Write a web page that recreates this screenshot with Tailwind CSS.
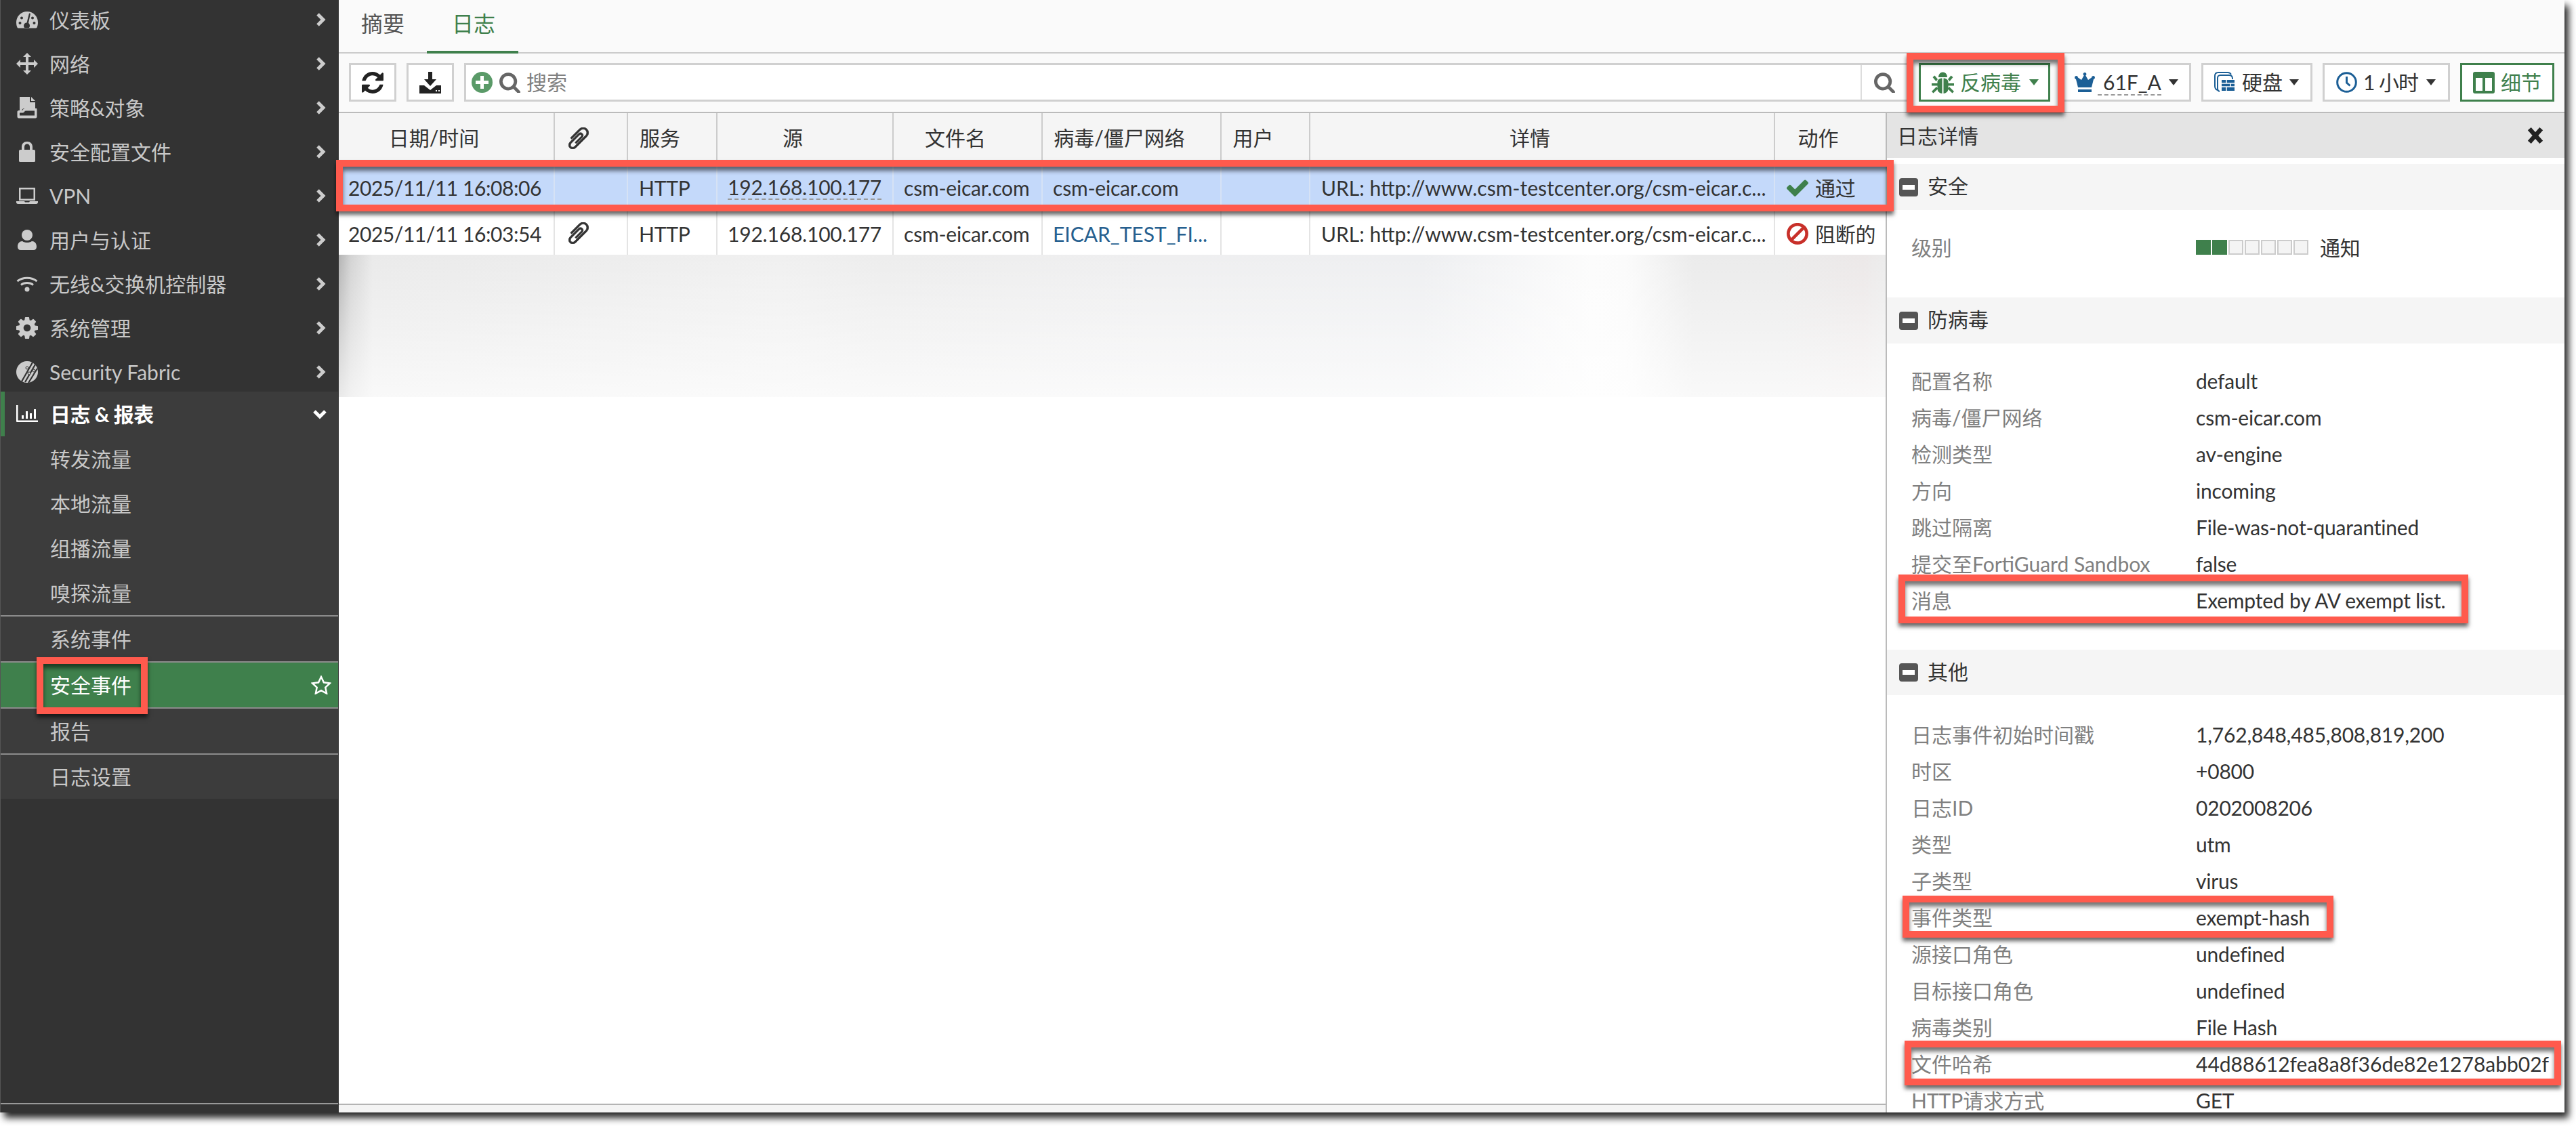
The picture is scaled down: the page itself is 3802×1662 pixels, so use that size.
<!DOCTYPE html>
<html lang="zh">
<head>
    <meta charset="UTF-8">
    <title>FortiGate 安全事件</title>
    <script src="https://cdn.jsdelivr.net/npm/@tailwindcss/browser@4"></script>
</head>
<body class="bg-white font-[Lato,'Noto_Sans_CJK_SC',sans-serif] text-[30px] text-[#333]">
<div class="relative w-[3802px] h-[1662px] overflow-hidden">
    <div class="flex w-[3785px] h-[1642px] bg-white shadow-[6px_8px_10px_rgba(0,0,0,0.85)]">

        <!-- Sidebar -->
        <aside class="flex flex-col w-[500px] h-full shrink-0 overflow-hidden bg-[#333] border-l border-[#555] text-[#c8c8c8]">
            <div class="-mt-[7px]">
                <a class="flex items-center h-[65px] pt-[7px] pl-[23px] pr-[19px]">
                    <svg class="w-[32px] h-[26px] fill-[#ccc]" viewBox="0 0 32 26"><path d="M16 1C7 1 0 8 0 17c0 3 .5 5 1.5 7.5 .3 .5 .8 1 1.5 1h26c.7 0 1.2-.5 1.500-1 1-2.500 1.500-4.500 1.500-7.500C32 8 25 1 16 1z"/><circle cx="5.500" cy="18" r="2" fill="#333"/><circle cx="8" cy="10.500" r="2" fill="#333"/><circle cx="26.500" cy="18" r="2" fill="#333"/><circle cx="24" cy="10.500" r="2" fill="#333"/><path d="M19 3.500l2 .5-3 14c1.500 1 2 2.500 2 4 0 1-.3 2-1 3h-7c-.7-1-1-2-1-3 0-2.500 2-4.500 4.500-4.500z" fill="#333"/></svg>
                    <span class="ml-[17px] flex-1">仪表板</span>
                    <svg class="w-[15px] h-[20px] fill-none stroke-[#ccc] stroke-[5px]" viewBox="0 0 15 20"><path d="M3 2l8 8-8 8"/></svg>
                </a>
                <a class="flex items-center h-[65px] pt-[7px] pl-[23px] pr-[19px]">
                    <svg class="w-[32px] h-[32px] fill-[#ccc]" viewBox="0 0 32 32"><path d="M16 0l6 6h-4v8h8v-4l6 6-6 6v-4h-8v8h4l-6 6-6-6h4v-8H6v4l-6-6 6-6v4h8V6h-4z"/></svg>
                    <span class="ml-[17px] flex-1">网络</span>
                    <svg class="w-[15px] h-[20px] fill-none stroke-[#ccc] stroke-[5px]" viewBox="0 0 15 20"><path d="M3 2l8 8-8 8"/></svg>
                </a>
                <a class="flex items-center h-[65px] pt-[7px] pl-[23px] pr-[19px]">
                    <svg class="w-[32px] h-[32px] fill-[#ccc]" viewBox="0 0 32 32"><path d="M5 0h15v8h8v9H12c-2 0-3 1-4 3H5z"/><path d="M22 0l6 6h-6z"/><path d="M2 22c0-1 .6-1.500 1.500-1.500H9c1.500-2 2-3 4-3h17v12c0 1-.5 1.500-1.500 1.500h-25C2.500 31 2 30.500 2 29.500zm2.500 1v5h23v-8H14c-1.500 0-2 1.500-3.500 3z" fill-rule="evenodd" stroke="#ccc" stroke-width="1"/></svg>
                    <span class="ml-[17px] flex-1">策略&amp;对象</span>
                    <svg class="w-[15px] h-[20px] fill-none stroke-[#ccc] stroke-[5px]" viewBox="0 0 15 20"><path d="M3 2l8 8-8 8"/></svg>
                </a>
                <a class="flex items-center h-[65px] pt-[7px] pl-[23px] pr-[19px]">
                    <svg class="w-[32px] h-[32px] fill-[#ccc]" viewBox="0 0 32 32"><path d="M8 13V9c0-5 3-8 8-8s8 3 8 8v4h2c1.500 0 2 1 2 2v14c0 1.500-.5 2-2 2H6c-1.500 0-2-.5-2-2V15c0-1 .5-2 2-2zm4 0h8V9c0-3-1.500-4.500-4-4.500S12 6 12 9z"/></svg>
                    <span class="ml-[17px] flex-1">安全配置文件</span>
                    <svg class="w-[15px] h-[20px] fill-none stroke-[#ccc] stroke-[5px]" viewBox="0 0 15 20"><path d="M3 2l8 8-8 8"/></svg>
                </a>
                <a class="flex items-center h-[65px] pt-[7px] pl-[23px] pr-[19px]">
                    <svg class="w-[32px] h-[26px] fill-[#ccc]" viewBox="0 0 32 26"><path d="M4 1h24v19H4zm2.500 2.500v14h19v-14z" fill-rule="evenodd"/><path d="M0 21h12l1 1.500h6l1-1.500h12v1.500c0 1.500-1 2.500-2.500 2.500h-27C1 25 0 24 0 22.500z"/></svg>
                    <span class="ml-[17px] flex-1">VPN</span>
                    <svg class="w-[15px] h-[20px] fill-none stroke-[#ccc] stroke-[5px]" viewBox="0 0 15 20"><path d="M3 2l8 8-8 8"/></svg>
                </a>
                <a class="flex items-center h-[65px] pt-[7px] pl-[23px] pr-[19px]">
                    <svg class="w-[32px] h-[32px] fill-[#ccc]" viewBox="0 0 32 32"><circle cx="16" cy="9" r="8"/><path d="M2 26c0-5 3-8 7-8 2 1.500 4.500 2 7 2s5-.5 7-2c4 0 7 3 7 8 0 3-1.500 5-4.500 5h-19C3.500 31 2 29 2 26z"/></svg>
                    <span class="ml-[17px] flex-1">用户与认证</span>
                    <svg class="w-[15px] h-[20px] fill-none stroke-[#ccc] stroke-[5px]" viewBox="0 0 15 20"><path d="M3 2l8 8-8 8"/></svg>
                </a>
                <a class="flex items-center h-[65px] pt-[7px] pl-[23px] pr-[19px]">
                    <svg class="w-[32px] h-[24px] fill-none stroke-[#ccc]" viewBox="0 0 32 24"><path stroke-width="3" d="M1.500 8c8-6.500 21-6.500 29 0M7 13.500c5-4 13-4 18 0"/><circle cx="16" cy="20" r="3.500" fill="#ccc" stroke="none"/></svg>
                    <span class="ml-[17px] flex-1">无线&amp;交换机控制器</span>
                    <svg class="w-[15px] h-[20px] fill-none stroke-[#ccc] stroke-[5px]" viewBox="0 0 15 20"><path d="M3 2l8 8-8 8"/></svg>
                </a>
                <a class="flex items-center h-[65px] pt-[7px] pl-[23px] pr-[19px]">
                    <svg class="w-[32px] h-[32px] fill-[#ccc]" viewBox="128 128 1536 1536"><path d="M1152 896q0-106-75-181t-181-75-181 75-75 181 75 181 181 75 181-75 75-181zm512-109v222q0 12-8 23t-20 13l-185 28q-19 54-39 91 35 50 107 138 10 12 10 25t-9 23q-27 37-99 108t-94 71q-12 0-26-9l-138-108q-44 23-91 38-16 136-29 186-7 28-36 28h-222q-14 0-24.500-8.500t-11.500-21.500l-28-184q-49-16-90-37l-141 107q-10 9-25 9-14 0-25-11-126-114-165-168-7-10-7-23 0-12 8-23 15-21 51-66.500t54-70.500q-27-50-41-99l-183-27q-13-2-21-12.500t-8-23.500v-222q0-12 8-23t19-13l186-28q14-46 39-92-40-57-107-138-10-12-10-24 0-10 9-23 26-36 98.500-107.500t94.500-71.500q13 0 26 10l138 107q44-23 91-38 16-136 29-186 7-28 36-28h222q14 0 24.500 8.500t11.500 21.500l28 184q49 16 90 37l142-107q9-9 24-9 13 0 25 10 129 119 165 170 7 8 7 22 0 12-8 23-15 21-51 66.500t-54 70.500q26 50 41 98l183 28q13 2 21 12.500t8 23.500z"/></svg>
                    <span class="ml-[17px] flex-1">系统管理</span>
                    <svg class="w-[15px] h-[20px] fill-none stroke-[#ccc] stroke-[5px]" viewBox="0 0 15 20"><path d="M3 2l8 8-8 8"/></svg>
                </a>
                <a class="flex items-center h-[65px] pt-[7px] pl-[23px] pr-[19px]">
                    <svg class="w-[32px] h-[32px] fill-[#ccc]" viewBox="0 0 32 32"><circle cx="16" cy="16" r="16"/><path d="M8 30L24 2M13 31L28 5M18 32L31 11" stroke="#333" stroke-width="2.200" fill="none"/><circle cx="16" cy="10" r="2" fill="#ccc" stroke="#333"/><circle cx="19" cy="18" r="2" fill="#ccc" stroke="#333"/><circle cx="26" cy="14" r="2" fill="#ccc" stroke="#333"/></svg>
                    <span class="ml-[17px] flex-1">Security Fabric</span>
                    <svg class="w-[15px] h-[20px] fill-none stroke-[#ccc] stroke-[5px]" viewBox="0 0 15 20"><path d="M3 2l8 8-8 8"/></svg>
                </a>
            </div>

            <!-- 日志 & 报表 -->
            <div class="bg-[#3c3c3c] mr-[1px]">
                <a class="flex items-center h-[66px] pl-[23px] pr-[19px] border-l-[6px] border-[#3f804c] text-white font-bold">
                    <svg class="w-[32px] h-[26px] -ml-[6px] fill-white" viewBox="0 0 32 26"><path d="M0 0h2.500v22.500H32V25H1.500C.5 25 0 24.500 0 23.500z"/><path d="M8 15h3v5H8zM14 9h3v11h-3zM20 12h3v8h-3zM26 6h3v14h-3z"/></svg>
                    <span class="ml-[18px] flex-1 tracking-[-0.5px]">日志 &amp; 报表</span>
                    <svg class="w-[20px] h-[15px] -mr-[2px] fill-none stroke-white stroke-[5px]" viewBox="0 0 20 15"><path d="M2 3l8 8 8-8"/></svg>
                </a>
                <a class="flex items-center h-[66px] pl-[73px]">转发流量</a>
                <a class="flex items-center h-[66px] pl-[73px]">本地流量</a>
                <a class="flex items-center h-[66px] pl-[73px]">组播流量</a>
                <a class="flex items-center h-[66px] pl-[73px]">嗅探流量</a>
                <a class="flex items-center h-[68px] pl-[73px] border-t-2 border-[#8c8c8c]">系统事件</a>
                <a class="flex items-center justify-between h-[68px] pl-[73px] pr-[10px] border-t-2 border-[#8c8c8c] bg-[#3f804c] text-white">安全事件
                    <svg class="w-[30px] h-[28px] fill-none stroke-white stroke-[2.500px]" viewBox="0 0 30 28"><path d="M15 2l3.900 8.300 9.100 1.100-6.700 6.200 1.800 9-8.100-4.500-8.100 4.500 1.800-9L2 11.400l9.100-1.100z"/></svg>
                </a>
                <a class="flex items-center h-[68px] pl-[73px] border-t-2 border-[#8c8c8c]">报告</a>
                <a class="flex items-center h-[67px] pl-[73px] border-t-2 border-[#8c8c8c]">日志设置</a>
            </div>
            <div class="mt-auto h-[14px] border-t-2 border-[#999] mr-[1px]"></div>
        </aside>

        <!-- Main -->
        <main class="flex flex-col flex-1 min-w-0 h-full">
            <!-- Tabs -->
            <div class="flex h-[79px] shrink-0 bg-[#fafafa] border-b-2 border-[#ccc] text-[32px] pl-[33px]">
                <a class="pt-[11px] text-[#555]">摘要</a>
                <a class="relative ml-[70px] pt-[11px] text-[#3f804c]">日志
                    <span class="absolute -left-[37px] -right-[34px] -bottom-[2px] h-[4px] bg-[#3f804c]"></span>
                </a>
            </div>

            <!-- Toolbar -->
            <div class="flex items-center gap-[15px] h-[88px] shrink-0 bg-[#fafafa] border-b-2 border-[#bbb] px-[15px] pb-[1px]">
                <button class="flex items-center justify-center w-[70px] h-[57px] bg-white border-[3px] border-[#d0d0d0]">
                    <svg class="w-[32px] h-[32px] fill-[#222]" viewBox="128 128 1536 1536"><path d="M1639 1056q0 5-1 7-64 268-268 434.500t-478 166.500q-146 0-282.500-55t-243.500-157l-129 129q-19 19-45 19t-45-19-19-45v-448q0-26 19-45t45-19h448q26 0 45 19t19 45-19 45l-137 137q71 66 161 102t187 36q134 0 250-65t186-179q11-17 53-117 8-23 30-23h192q13 0 22.500 9.500t9.500 22.500zm25-800v448q0 26-19 45t-45 19h-448q-26 0-45-19t-19-45 19-45l138-138q-148-137-349-137-134 0-250 65t-186 179q-11 17-53 117-8 23-30 23h-199q-13 0-22.500-9.500t-9.500-22.500v-7q65-268 270-434.500t480-166.500q146 0 284 55.500t245 156.500l130-129q19-19 45-19t45 19 19 45z"/></svg>
                </button>
                <button class="flex items-center justify-center w-[70px] h-[57px] bg-white border-[3px] border-[#d0d0d0]">
                    <svg class="w-[32px] h-[32px] fill-[#222]" viewBox="0 0 32 32"><path d="M13 0h6v11h6l-9 10-9-10h6z"/><path d="M0 20h7l9 7 9-7h7v12H0z"/><path d="M24 27h2v2h-2zM28 27h2v2h-2z" fill="#fff"/></svg>
                </button>
                <div class="flex items-center flex-1 min-w-0 h-[57px] bg-white border-[3px] border-[#d0d0d0] pl-[8px]">
                    <svg class="w-[31px] h-[31px] shrink-0" viewBox="0 0 31 31"><circle cx="15.500" cy="15.500" r="15.500" fill="#5a9a68"/><path d="M13 6h5v7h7v5h-7v7h-5v-7H6v-5h7z" fill="#fff"/></svg>
                    <svg class="w-[31px] h-[31px] ml-[10px] shrink-0 fill-[#666]" viewBox="64 64 1664 1664"><path d="M1216 832q0-185-131.500-316.500t-316.500-131.500-316.500 131.500-131.500 316.500 131.500 316.500 316.500 131.500 316.500-131.500 131.500-316.500zm512 832q0 52-38 90t-90 38q-54 0-90-38l-343-342q-179 124-399 124-143 0-273.500-55.500t-225-150-150-225-55.500-273.500 55.500-273.500 150-225 225-150 273.500-55.500 273.500 55.500 225 150 150 225 55.500 273.500q0 220-124 399l343 343q37 37 37 90z"/></svg>
                    <span class="ml-[9px] flex-1 text-[#808080]">搜索</span>
                    <div class="flex items-center justify-center w-[68px] h-full border-l-2 border-[#ddd]">
                        <svg class="w-[31px] h-[31px] fill-[#666]" viewBox="64 64 1664 1664"><path d="M1216 832q0-185-131.500-316.500t-316.500-131.500-316.500 131.500-131.500 316.500 131.500 316.500 316.500 131.500 316.500-131.500 131.500-316.500zm512 832q0 52-38 90t-90 38q-54 0-90-38l-343-342q-179 124-399 124-143 0-273.500-55.500t-225-150-150-225-55.500-273.500 55.500-273.500 150-225 225-150 273.500-55.500 273.500 55.500 225 150 150 225 55.500 273.500q0 220-124 399l343 343q37 37 37 90z"/></svg>
                    </div>
                </div>
                <button class="flex items-center w-[194px] h-[57px] shrink-0 bg-white border-[3px] border-[#3f804c] pl-[16px] text-[#3f804c]">
                    <svg class="w-[33px] h-[32px] fill-[#3f804c]" viewBox="0 0 33 32"><path d="M10 8c0-4.500 3-7.500 6.500-7.500S23 3.500 23 8z"/><path d="M15.500 9.500V32c-4.500-.5-7-3-7-7.500v-9.500c0-3 2.500-5.500 7-5.500zM17.500 9.500c4.500 0 7 2.500 7 5.500v9.500c0 4.500-2.500 7-7 7.500z"/><path d="M1.500 8l3-2.500L9 11l-2.500 3zM31.500 8l-3-2.500L24 11l2.500 3zM0 17h9v3.500H0zM24 17h9v3.500h-9zM2.500 31.500L0 29l7-7 2.500 3zM30.500 31.500L33 29l-7-7-2.500 3z"/></svg>
                    <span class="ml-[9px]">反病毒</span>
                    <span class="ml-[12px] border-x-[7px] border-t-[9px] border-x-transparent border-t-[#3f804c]"></span>
                </button>
                <button class="flex items-center w-[193px] h-[57px] shrink-0 bg-white border-[3px] border-[#d0d0d0] pl-[17px]">
                    <svg class="w-[32px] h-[30px] fill-[#1c5f96]" viewBox="0 0 32 30"><path d="M16 0a2.500 2.500 0 0 1 1.300 4.600L21 11l5-3.500a2.500 2.500 0 1 1 3 2.500l-3 12H6L3 10a2.500 2.500 0 1 1 3-2.500L11 11l3.700-6.400A2.500 2.500 0 0 1 16 0z"/><path d="M6 25h20v4H6z"/></svg>
                    <span class="ml-[3px] pl-[8px] border-b-2 border-dashed border-[#999] leading-[36px]">61F_A</span>
                    <span class="ml-[11px] border-x-[7px] border-t-[9px] border-x-transparent border-t-[#333]"></span>
                </button>
                <button class="flex items-center w-[164px] h-[57px] shrink-0 bg-white border-[3px] border-[#d0d0d0] pl-[16px]">
                    <svg class="w-[32px] h-[32px] fill-none stroke-[#1c5f96] stroke-[2px]" viewBox="0 0 32 32"><path d="M5 27C2 26 1 24 1 21V6c0-3 2-5 5-5h14c3 0 4 1 5 3"/><path d="M8 29c-2-.5-3-2-3-4V9c0-2 1.500-4 4-4h13c3 0 5 2 5 5v1"/><path d="M11 12h19v16H11z" fill="#1c5f96" stroke="none"/><path d="M11 17h19M11 22h19M18 12v5M24 17v5M18 22v6" stroke="#fff" stroke-width="1.500"/></svg>
                    <span class="ml-[9px]">硬盘</span>
                    <span class="ml-[10px] border-x-[7px] border-t-[9px] border-x-transparent border-t-[#333]"></span>
                </button>
                <button class="flex items-center w-[188px] h-[57px] shrink-0 bg-white border-[3px] border-[#d0d0d0] pl-[17px]">
                    <svg class="w-[31px] h-[31px] fill-none stroke-[#1c5f96]" viewBox="0 0 31 31"><circle cx="15.500" cy="15.500" r="13.800" stroke-width="3"/><path d="M15.500 7v9l5 4.500" stroke-width="3"/></svg>
                    <span class="ml-[9px] tracking-[-1px]">1 小时</span>
                    <span class="ml-[12px] border-x-[7px] border-t-[9px] border-x-transparent border-t-[#333]"></span>
                </button>
                <button class="flex items-center w-[139px] h-[57px] shrink-0 bg-white border-[3px] border-[#3f804c] pl-[16px] text-[#3f804c]">
                    <svg class="w-[32px] h-[32px] fill-[#3f804c]" viewBox="0 0 32 32"><path d="M3 0h26c2 0 3 1 3 3v26c0 2-1 3-3 3H3c-2 0-3-1-3-3V3c0-2 1-3 3-3zm1 9v19h10V9zm14 0v19h10V9z" fill-rule="evenodd"/></svg>
                    <span class="ml-[9px]">细节</span>
                </button>
            </div>

            <div class="flex flex-1 min-h-0">
                <!-- Log table -->
                <section class="flex flex-col w-[2283px] shrink-0">
                    <div class="grid grid-cols-[319px_108px_132px_260px_220px_264px_131px_686px_163px] h-[73px] shrink-0 bg-[#f5f5f5] text-center">
                        <div class="flex items-center justify-center pr-[36px] border-r-2 border-[#ccc]">日期/时间</div>
                        <div class="flex items-center justify-center pr-[36px] border-r-2 border-[#ccc]">
                            <svg class="w-[32px] h-[32px] -scale-x-100 fill-[#333] stroke-[#333] stroke-[40px]" viewBox="132 132 1528 1528"><path d="M1596 1385q0 117-79 196t-196 79q-135 0-235-100l-777-776q-113-115-113-271 0-159 110-270t269-111q158 0 273 113l605 606q10 10 10 22 0 16-30.500 46.500t-46.500 30.500q-13 0-23-10l-606-607q-79-77-181-77-106 0-179 75t-73 181q0 105 76 181l776 777q63 63 145 63 64 0 106-42t42-106q0-82-63-145l-581-581q-26-24-60-24-29 0-48 19t-19 48q0 32 25 59l410 410q10 10 10 22 0 16-31 47t-47 31q-12 0-22-10l-410-410q-63-61-63-149 0-82 57-139t139-57q88 0 149 63l581 581q100 98 100 235z"/></svg>
                        </div>
                        <div class="flex items-center justify-center pr-[36px] border-r-2 border-[#ccc]">服务</div>
                        <div class="flex items-center justify-center pr-[36px] border-r-2 border-[#ccc]">源</div>
                        <div class="flex items-center justify-center pr-[36px] border-r-2 border-[#ccc]">文件名</div>
                        <div class="flex items-center justify-center pr-[36px] border-r-2 border-[#ccc]">病毒/僵尸网络</div>
                        <div class="flex items-center justify-center pr-[36px] border-r-2 border-[#ccc]">用户</div>
                        <div class="flex items-center justify-center pr-[36px] border-r-2 border-[#ccc]">详情</div>
                        <div class="flex items-center justify-center pr-[36px]">动作</div>
                    </div>
                    <div class="grid grid-cols-[319px_108px_132px_260px_220px_264px_131px_686px_163px] h-[68px] shrink-0 bg-[#c4d9fa] whitespace-nowrap tracking-[-0.2px]">
                        <div class="flex items-center pt-[6px] pl-[14px] border-r-2 border-[#d6e2f5] tracking-[-0.45px]">2025/11/11 16:08:06</div>
                        <div class="border-r-2 border-[#d6e2f5]"></div>
                        <div class="flex items-center pt-[6px] pl-[16px] border-r-2 border-[#d6e2f5]">HTTP</div>
                        <div class="flex items-center pt-[6px] pl-[15px] border-r-2 border-[#d6e2f5]"><span class="border-b-2 border-dashed border-[#999] leading-[33px]">192.168.100.177</span></div>
                        <div class="flex items-center pt-[6px] pl-[15px] border-r-2 border-[#d6e2f5]">csm-eicar.com</div>
                        <div class="flex items-center pt-[6px] pl-[15px] border-r-2 border-[#d6e2f5]">csm-eicar.com</div>
                        <div class="border-r-2 border-[#d6e2f5]"></div>
                        <div class="flex items-center pt-[6px] pl-[16px] border-r-2 border-[#d6e2f5] tracking-normal">URL: http://www.csm-testcenter.org/csm-eicar.c...</div>
                        <div class="flex items-center pt-[6px] pl-[17px]">
                            <svg class="w-[32px] h-[32px] fill-[#3f804c]" viewBox="121 121 1550 1550"><path d="M1671 566q0 40-28 68l-724 724-136 136q-28 28-68 28t-68-28l-136-136-362-362q-28-28-28-68t28-68l136-136q28-28 68-28t68 28l294 295 656-657q28-28 68-28t68 28l136 136q28 28 28 68z"/></svg>
                            <span class="ml-[10px]">通过</span>
                        </div>
                    </div>
                    <div class="grid grid-cols-[319px_108px_132px_260px_220px_264px_131px_686px_163px] h-[68px] shrink-0 bg-white whitespace-nowrap tracking-[-0.2px]">
                        <div class="flex items-center pt-[6px] pl-[14px] border-r-2 border-[#e4e4e4] tracking-[-0.45px]">2025/11/11 16:03:54</div>
                        <div class="flex items-center justify-center pr-[36px] pt-[4px] border-r-2 border-[#e4e4e4]">
                            <svg class="w-[32px] h-[32px] -scale-x-100 fill-[#333] stroke-[#333] stroke-[40px]" viewBox="132 132 1528 1528"><path d="M1596 1385q0 117-79 196t-196 79q-135 0-235-100l-777-776q-113-115-113-271 0-159 110-270t269-111q158 0 273 113l605 606q10 10 10 22 0 16-30.500 46.500t-46.500 30.500q-13 0-23-10l-606-607q-79-77-181-77-106 0-179 75t-73 181q0 105 76 181l776 777q63 63 145 63 64 0 106-42t42-106q0-82-63-145l-581-581q-26-24-60-24-29 0-48 19t-19 48q0 32 25 59l410 410q10 10 10 22 0 16-31 47t-47 31q-12 0-22-10l-410-410q-63-61-63-149 0-82 57-139t139-57q88 0 149 63l581 581q100 98 100 235z"/></svg>
                        </div>
                        <div class="flex items-center pt-[6px] pl-[16px] border-r-2 border-[#e4e4e4]">HTTP</div>
                        <div class="flex items-center pt-[6px] pl-[15px] border-r-2 border-[#e4e4e4]">192.168.100.177</div>
                        <div class="flex items-center pt-[6px] pl-[15px] border-r-2 border-[#e4e4e4]">csm-eicar.com</div>
                        <div class="flex items-center pt-[6px] pl-[15px] border-r-2 border-[#e4e4e4] text-[#26608f] tracking-normal">EICAR_TEST_FI...</div>
                        <div class="border-r-2 border-[#e4e4e4]"></div>
                        <div class="flex items-center pt-[6px] pl-[16px] border-r-2 border-[#e4e4e4] tracking-normal">URL: http://www.csm-testcenter.org/csm-eicar.c...</div>
                        <div class="flex items-center pt-[6px] pl-[17px]">
                            <svg class="w-[32px] h-[32px] fill-[#c8302a]" viewBox="128 128 1536 1536"><path d="M1440 893q0-161-87-295l-754 753q137 89 297 89 111 0 211.500-43.500t173.500-116.500 116-174.500 43-212.500zm-999 299l755-754q-135-91-300-91-148 0-273 73t-198 199-73 274q0 162 89 299zm1223-299q0 157-61 300t-163.500 246-245 164-298.500 61-298.500-61-245-164-163.500-246-61-300 61-299.500 163.500-245.500 245-164 298.500-61 298.500 61 245 164 163.500 245.500 61 299.500z"/></svg>
                            <span class="ml-[10px]">阻断的</span>
                        </div>
                    </div>
                    <!-- blurred rows -->
                    <div class="h-[210px] shrink-0 bg-[linear-gradient(180deg,rgba(255,255,255,0)_0%,rgba(255,255,255,0.7)_100%),linear-gradient(90deg,#b4b4b4_0px,#d4d4d4_18px,#eaeaea_50px,#ededed_400px,#f0f0f0_650px,#ededed_800px,#efeff0_1200px,#eeeff1_1600px,#fcfcfc_1850px,#fbfbfb_1900px,#ebebeb_2000px,#ebebeb_2130px,#ece8e8_2250px,#ececec_2283px)]"></div>
                    <div class="flex-1"></div>
                    <div class="h-[13px] shrink-0 bg-[#f4f4f4] border-t-2 border-[#b4b4b4]"></div>
                </section>

                <!-- Log details -->
                <section class="flex flex-col flex-1 min-w-0 overflow-hidden bg-white border-l-2 border-[#bbb] whitespace-nowrap">
                    <div class="flex items-center justify-between h-[66px] shrink-0 bg-[#e4e4e4] pl-[15px] pr-[31px]">日志详情
                        <svg class="w-[24px] h-[24px] stroke-[#222] stroke-[6px]" viewBox="0 0 22 22"><path d="M3 2l16 18M19 2L3 20"/></svg>
                    </div>

                    <div class="flex items-center h-[68px] shrink-0 mt-[9px] bg-[#f5f5f5] pl-[18px] pb-[3px]">
                        <span class="relative w-[28px] h-[27px] mr-[14px] mt-[3px] rounded-[4px] bg-[#555]"><span class="absolute left-[5px] top-[10px] w-[18px] h-[7px] bg-white"></span></span>安全
                    </div>
                    <div class="grid grid-cols-[420px_1fr] items-center h-[54px] shrink-0 mt-[28px] pl-[36px] tracking-[-0.2px]">
                        <span class="text-[#808080]">级别</span>
                        <span class="flex items-center">
                            <span class="w-[22px] h-[22px] mr-[2px] bg-[#3f804c]"></span>
                            <span class="w-[22px] h-[22px] mr-[2px] bg-[#3f804c]"></span>
                            <span class="w-[22px] h-[22px] mr-[2px] bg-[#f4f4f4] border-2 border-[#ccc]"></span>
                            <span class="w-[22px] h-[22px] mr-[2px] bg-[#f4f4f4] border-2 border-[#ccc]"></span>
                            <span class="w-[22px] h-[22px] mr-[2px] bg-[#f4f4f4] border-2 border-[#ccc]"></span>
                            <span class="w-[22px] h-[22px] mr-[2px] bg-[#f4f4f4] border-2 border-[#ccc]"></span>
                            <span class="w-[22px] h-[22px] mr-[17px] bg-[#f4f4f4] border-2 border-[#ccc]"></span>
                            通知
                        </span>
                    </div>

                    <div class="flex items-center h-[68px] shrink-0 mt-[47px] bg-[#f5f5f5] pl-[18px] pb-[3px]">
                        <span class="relative w-[28px] h-[27px] mr-[14px] mt-[3px] rounded-[4px] bg-[#555]"><span class="absolute left-[5px] top-[10px] w-[18px] h-[7px] bg-white"></span></span>防病毒
                    </div>
                    <div class="grid grid-cols-[420px_1fr] auto-rows-[54px] items-center shrink-0 mt-[28px] pl-[36px]">
                        <span class="text-[#808080]">配置名称</span><span class="tracking-[-0.2px]">default</span>
                        <span class="text-[#808080]">病毒/僵尸网络</span><span class="tracking-[-0.2px]">csm-eicar.com</span>
                        <span class="text-[#808080]">检测类型</span><span class="tracking-[-0.2px]">av-engine</span>
                        <span class="text-[#808080]">方向</span><span class="tracking-[-0.2px]">incoming</span>
                        <span class="text-[#808080]">跳过隔离</span><span class="tracking-[-0.2px]">File-was-not-quarantined</span>
                        <span class="text-[#808080]">提交至FortiGuard Sandbox</span><span class="tracking-[-0.2px]">false</span>
                        <span class="text-[#808080]">消息</span><span class="tracking-[-0.2px]">Exempted by AV exempt list.</span>
                    </div>

                    <div class="flex items-center h-[67px] shrink-0 mt-[46px] bg-[#f5f5f5] pl-[18px] pb-[3px]">
                        <span class="relative w-[28px] h-[27px] mr-[14px] mt-[3px] rounded-[4px] bg-[#555]"><span class="absolute left-[5px] top-[10px] w-[18px] h-[7px] bg-white"></span></span>其他
                    </div>
                    <div class="grid grid-cols-[420px_1fr] auto-rows-[54px] items-center shrink-0 mt-[31px] pl-[36px]">
                        <span class="text-[#808080]">日志事件初始时间戳</span><span class="tracking-[-0.2px]">1,762,848,485,808,819,200</span>
                        <span class="text-[#808080]">时区</span><span class="tracking-[-0.2px]">+0800</span>
                        <span class="text-[#808080]">日志ID</span><span class="tracking-[-0.2px]">0202008206</span>
                        <span class="text-[#808080]">类型</span><span class="tracking-[-0.2px]">utm</span>
                        <span class="text-[#808080]">子类型</span><span class="tracking-[-0.2px]">virus</span>
                        <span class="text-[#808080]">事件类型</span><span class="tracking-[-0.2px]">exempt-hash</span>
                        <span class="text-[#808080]">源接口角色</span><span class="tracking-[-0.2px]">undefined</span>
                        <span class="text-[#808080]">目标接口角色</span><span class="tracking-[-0.2px]">undefined</span>
                        <span class="text-[#808080]">病毒类别</span><span class="tracking-[-0.2px]">File Hash</span>
                        <span class="text-[#808080]">文件哈希</span><span>44d88612fea8a8f36de82e1278abb02f</span>
                        <span class="text-[#808080]">HTTP请求方式</span><span class="tracking-[-0.2px]">GET</span>
                    </div>
                </section>
            </div>
        </main>
    </div>

    <!-- Red annotation boxes -->
    <div class="absolute left-[54px] top-[970px] w-[164px] h-[84px] border-[10px] border-[#ff5a4d] shadow-[0_5px_6px_rgba(0,0,0,0.6),inset_0_6px_6px_rgba(0,0,0,0.55)]"></div>
    <div class="absolute left-[496px] top-[236px] w-[2299px] h-[76px] border-[10px] border-[#ff5a4d] shadow-[0_5px_6px_rgba(0,0,0,0.6),inset_0_6px_6px_rgba(0,0,0,0.55)]"></div>
    <div class="absolute left-[2814px] top-[78px] w-[233px] h-[88px] border-[10px] border-[#ff5a4d] shadow-[0_5px_6px_rgba(0,0,0,0.6),inset_0_6px_6px_rgba(0,0,0,0.55)]"></div>
    <div class="absolute left-[2802px] top-[848px] w-[841px] h-[72px] border-[10px] border-[#ff5a4d] shadow-[0_5px_6px_rgba(0,0,0,0.6),inset_0_6px_6px_rgba(0,0,0,0.55)]"></div>
    <div class="absolute left-[2808px] top-[1322px] w-[636px] h-[62px] border-[10px] border-[#ff5a4d] shadow-[0_5px_6px_rgba(0,0,0,0.6),inset_0_6px_6px_rgba(0,0,0,0.55)]"></div>
    <div class="absolute left-[2811px] top-[1536px] w-[969px] h-[66px] border-[10px] border-[#ff5a4d] shadow-[0_5px_6px_rgba(0,0,0,0.6),inset_0_6px_6px_rgba(0,0,0,0.55)]"></div>
</div>
</body>
</html>
